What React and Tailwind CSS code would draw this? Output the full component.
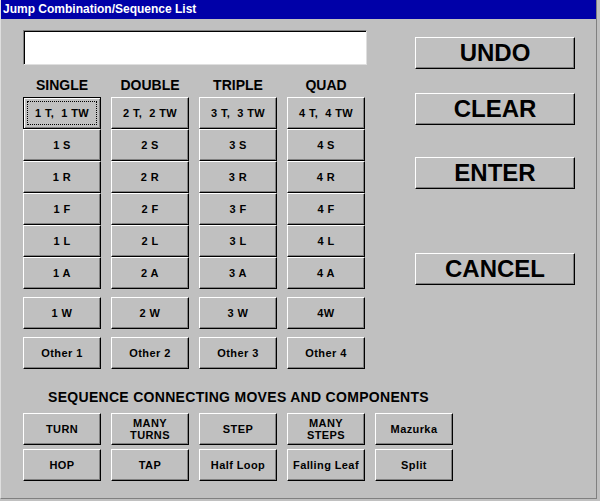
import React from 'react';

const jumpCols = [
    { title: 'SINGLE', n: '1', w: '1 W', other: 'Other 1' },
    { title: 'DOUBLE', n: '2', w: '2 W', other: 'Other 2' },
    { title: 'TRIPLE', n: '3', w: '3 W', other: 'Other 3' },
    { title: 'QUAD', n: '4', w: '4W', other: 'Other 4' },
];

const seqRows = [
    ['TURN', 'MANY\nTURNS', 'STEP', 'MANY\nSTEPS', 'Mazurka'],
    ['HOP', 'TAP', 'Half Loop', 'Falling Leaf', 'Split'],
];

const Btn = ({ children, className = '' }) => (
    <button
        className={`relative flex items-center justify-center bg-[#c0c0c0] text-black border border-t-white border-l-white border-b-black border-r-black shadow-[inset_-1px_-1px_0_#808080] ${className}`}
    >
        {children}
    </button>
);

const SmallBtn = ({ label }) => (
    <Btn className="w-[78px] h-[32px] text-[11px] font-bold leading-[12px] tracking-[0.4px] whitespace-pre text-center">
        {label}
    </Btn>
);

const DefaultBtn = ({ label }) => (
    <button className="relative flex items-center justify-center w-[78px] h-[32px] bg-[#c0c0c0] text-black border border-black shadow-[inset_1px_1px_0_#fff,inset_-1px_-1px_0_#808080] text-[11px] font-bold tracking-[0.4px] whitespace-pre">
        {label}
        <span className="absolute inset-[3px] border border-dotted border-black" />
    </button>
);

const BigBtn = ({ label }) => (
    <Btn className="w-[160px] h-[32px] text-[24px] font-bold leading-none">{label}</Btn>
);

export default function App() {
    return (
        <div className="w-[600px] h-[501px] bg-[#c0c0c0] font-['Liberation_Sans',Arial,sans-serif]">
            <div className="w-[597px] h-[499px] border-r border-b border-r-[#808080] border-b-[#808080] border-l border-l-[#dfdfdf] flex flex-col">
                {/* Title bar */}
                <div className="h-[19px] bg-[#0000a8] text-white text-[12px] font-bold leading-[19px] pl-[2px]">
                    Jump Combination/Sequence List
                </div>

                <div className="flex">
                    {/* Left side: entry box + jump grid */}
                    <div className="pl-[22px] pt-[11px]">
                        <div className="w-[344px] h-[35px] bg-white border border-t-[#808080] border-l-[#808080] border-b-[#dfdfdf] border-r-[#dfdfdf] shadow-[inset_1px_1px_0_#000]" />

                        <div className="flex gap-[10px] mt-[12px]">
                            {jumpCols.map((c, i) => (
                                <div key={c.title} className="flex flex-col w-[78px]">
                                    <div className="h-[16px] text-center text-[14px] font-bold leading-[16px]">{c.title}</div>
                                    <div className="mt-[4px] flex flex-col">
                                        {i === 0 ? (
                                            <DefaultBtn label={`1 T,  1 TW`} />
                                        ) : (
                                            <SmallBtn label={`${c.n} T,  ${c.n} TW`} />
                                        )}
                                        {['S', 'R', 'F', 'L', 'A'].map((s) => (
                                            <SmallBtn key={s} label={`${c.n} ${s}`} />
                                        ))}
                                    </div>
                                    <div className="mt-[8px] flex flex-col gap-[8px]">
                                        <SmallBtn label={c.w} />
                                        <SmallBtn label={c.other} />
                                    </div>
                                </div>
                            ))}
                        </div>
                    </div>

                    {/* Right side: action buttons */}
                    <div className="ml-[48px] pt-[18px] flex flex-col">
                        <BigBtn label="UNDO" />
                        <div className="mt-[24px]"><BigBtn label="CLEAR" /></div>
                        <div className="mt-[32px]"><BigBtn label="ENTER" /></div>
                        <div className="mt-[64px]"><BigBtn label="CANCEL" /></div>
                    </div>
                </div>

                {/* Sequence connecting moves */}
                <div className="pl-[22px] mt-[20px]">
                    <div className="pl-[25px] h-[16px] text-[14px] font-bold leading-[16px] tracking-[0.3px]">
                        SEQUENCE CONNECTING MOVES AND COMPONENTS
                    </div>
                    <div className="mt-[8px] flex flex-col gap-[4px]">
                        {seqRows.map((row, r) => (
                            <div key={r} className="flex gap-[10px]">
                                {row.map((label) => (
                                    <SmallBtn key={label} label={label} />
                                ))}
                            </div>
                        ))}
                    </div>
                </div>
            </div>
        </div>
    );
}
